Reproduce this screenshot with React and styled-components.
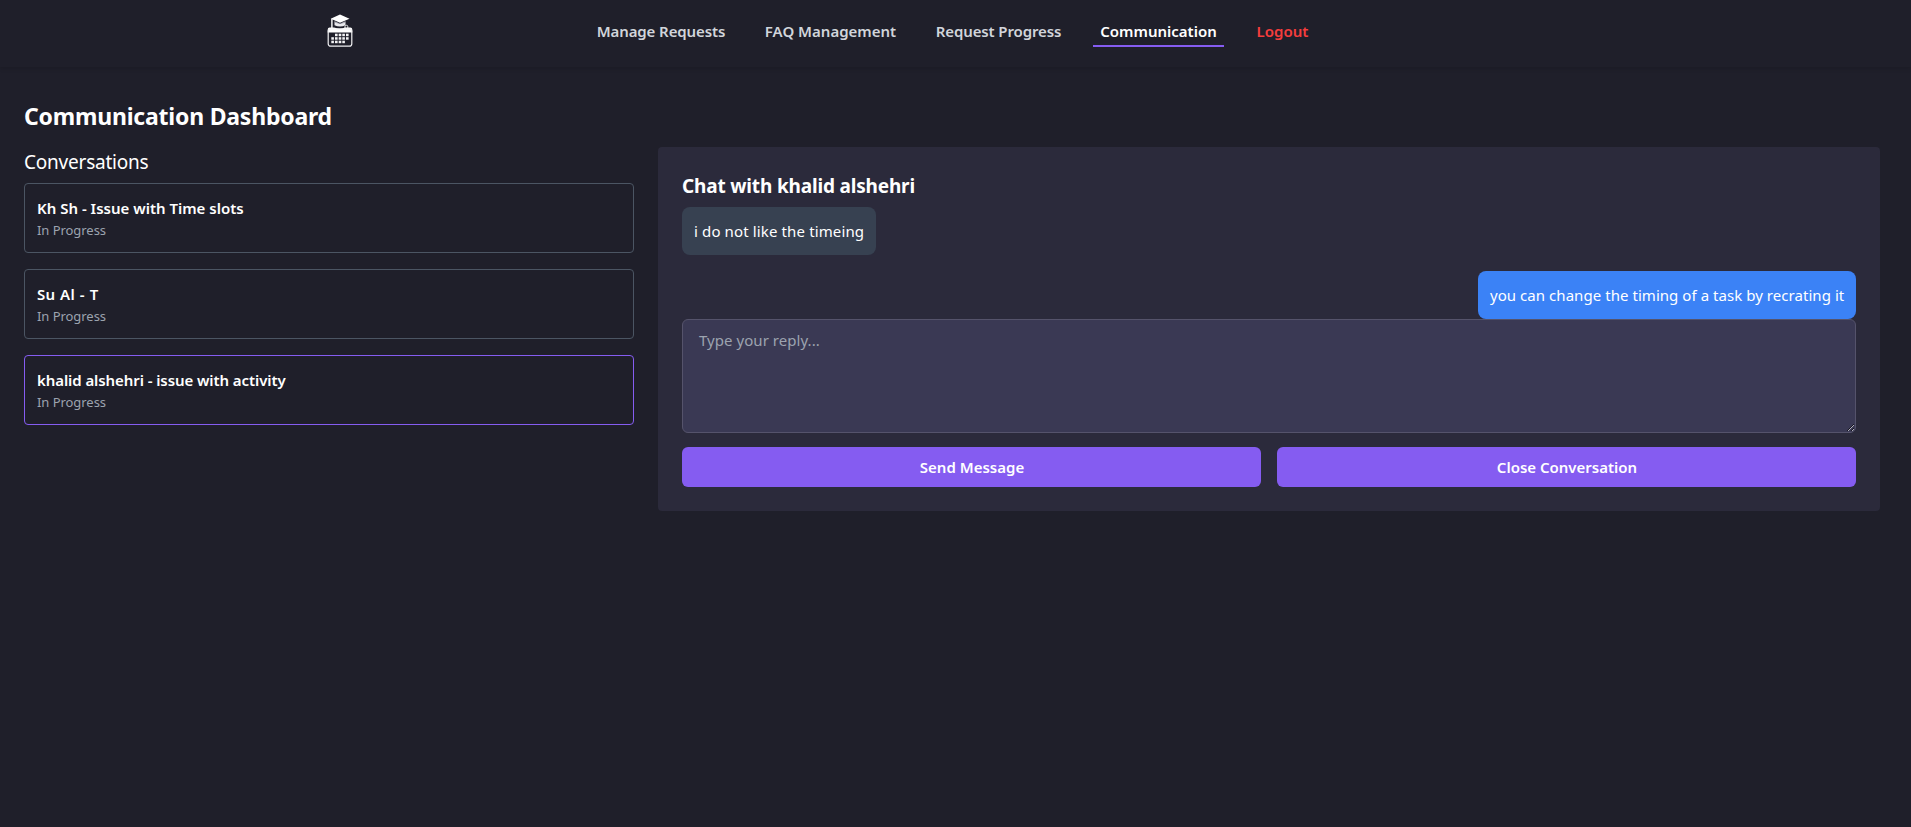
import React from "react";
import styled, { createGlobalStyle } from "styled-components";

const Global = createGlobalStyle`
  *, *::before, *::after { box-sizing: border-box; }
  body {
    margin: 0;
    min-height: 100vh;
    background: #1f1f2a;
    color: #fff;
    font: 400 16px/24px "Segoe UI", "Noto Sans", sans-serif;
  }
  h1, h2, h3, p { margin: 0; }
`;

const Header = styled.header`
  display: flex;
  align-items: flex-start;
  height: 67px;
  padding: 14px 0 0 327px;
  background: #1f1f2a;
  box-shadow: 0 2px 4px rgba(0, 0, 0, 0.12);
`;

const Logo = styled.svg`
  width: 26px;
  height: 33px;
  flex: none;
`;

const Nav = styled.nav`
  display: flex;
  gap: 24px;
  margin-left: 236px;
`;

const NavLink = styled.a`
  flex: none;
  width: ${(p) => p.$width}px;
  height: 33px;
  padding: 5px 0 0;
  text-align: center;
  white-space: nowrap;
  font-weight: 600;
  font-size: 15px;
  letter-spacing: ${(p) => p.$track || 0}px;
  color: ${(p) => p.$color || "#d1d5db"};
  border-bottom: 2px solid ${(p) => (p.$active ? "#855cf1" : "transparent")};
`;

const Main = styled.main`
  width: 1904px;
  padding: 33px 24px 24px;
`;

const PageTitle = styled.h1`
  font-weight: 700;
  font-size: 23px;
  line-height: 32px;
  letter-spacing: -0.21px;
`;

const Columns = styled.div`
  display: grid;
  grid-template-columns: 610px 1fr;
  gap: 24px;
  align-items: start;
  margin-top: 15px;
`;

const SectionTitle = styled.h2`
  font-weight: 400;
  font-size: 19px;
  line-height: 28px;
  letter-spacing: -0.22px;
  padding-top: 1px;
  margin-bottom: 7px;
`;

const ConversationList = styled.div`
  display: flex;
  flex-direction: column;
  gap: 16px;
`;

const Conversation = styled.div`
  height: 70px;
  padding: 12px;
  border: 1px solid ${(p) => (p.$selected ? "#855cf1" : "#4b5563")};
  border-radius: 4px;
`;

const Subject = styled.p`
  font-weight: 600;
  font-size: 15px;
  line-height: 24px;
  letter-spacing: ${(p) => p.$track || 0}px;
  word-spacing: ${(p) => p.$gap || 0}px;
`;

const Status = styled.p`
  font-size: 13px;
  line-height: 20px;
  letter-spacing: -0.05px;
  color: #9ca3af;
`;

const Panel = styled.section`
  height: 364px;
  padding: 24px;
  background: #2b2a3b;
  border-radius: 4px;
`;

const ChatTitle = styled.h3`
  font-weight: 700;
  font-size: 19px;
  line-height: 28px;
  letter-spacing: -0.17px;
  padding-top: 1px;
  margin-bottom: 7px;
`;

const Messages = styled.div`
  display: flex;
  flex-direction: column;
  gap: 16px;
`;

const Bubble = styled.div`
  align-self: ${(p) => (p.$mine ? "flex-end" : "flex-start")};
  width: ${(p) => p.$width}px;
  padding: 12px;
  border-radius: 8px;
  background: ${(p) => (p.$mine ? "#3b82f6" : "#374151")};
  font-size: 15px;
  letter-spacing: ${(p) => (p.$mine ? 0.05 : 0.13)}px;
  white-space: nowrap;
`;

const Reply = styled.textarea`
  display: block;
  width: 100%;
  height: 114px;
  padding: 8px 16px;
  border: 1px solid #55536b;
  border-radius: 6px;
  background: #3a3954;
  color: #fff;
  font: inherit;
  font-size: 15px;
  letter-spacing: 0.05px;
  &::placeholder { color: #9ca3af; }
`;

const Actions = styled.div`
  display: grid;
  grid-template-columns: 1fr 1fr;
  gap: 16px;
  margin-top: 14px;
`;

const Button = styled.button`
  height: 40px;
  padding: 0 0 0 1px;
  border: 0;
  border-radius: 6px;
  background: #855cf1;
  color: #fff;
  font: inherit;
  font-weight: 600;
  font-size: 15px;
`;

const navItems = [
  { label: "Manage Requests", width: 144, track: -0.1 },
  { label: "FAQ Management", width: 147 },
  { label: "Request Progress", width: 141, track: -0.12 },
  { label: "Communication", width: 131, active: true, color: "#fff" },
  { label: "Logout", width: 69, color: "#f53d3d" },
];

const conversations = [
  { subject: "Kh Sh - Issue with Time slots" },
  { subject: "Su Al - T", track: 0.2, gap: 0.8 },
  { subject: "khalid alshehri - issue with activity", track: -0.08, selected: true },
];

const dots = [
  [8, 19.7], [11.7, 19.7], [15.3, 19.7], [19, 19.7],
  [4.3, 23.2], [8, 23.2], [11.7, 23.2], [15.3, 23.2], [19, 23.2],
  [4.3, 26.7], [8, 26.7], [11.7, 26.7], [15.3, 26.7],
];

function CalendarLogo() {
  return (
    <Logo viewBox="0 0 26 33" fill="none">
      <path d="M13 0.500 22.500 4.700 13 8.700 3.700 4.700Z" fill="#fff" />
      <path d="M7.500 7.300 13 9.700l5.500-2.400v3.900Q13 14 7.500 11.200Z" fill="#e8e8ec" />
      <path d="M8 8.300Q13 11 18 8.300" stroke="#77778a" strokeWidth="0.500" />
      <path d="M4.900 5v9" stroke="#fff" strokeWidth="1.400" />
      <rect x="18" y="11.300" width="2.800" height="4" rx="1.300" stroke="#eee" strokeWidth="1" />
      <path d="M0.700 15.500q0-2 2-2h4.300q6 2.200 11 0h5.300q2 0 2 2v3H0.700Z" fill="#fff" />
      <rect x="1.200" y="15" width="23.600" height="17.200" rx="2.500" stroke="#f0f0f2" strokeWidth="1.200" />
      {dots.map(([x, y]) => (
        <rect key={`${x}-${y}`} x={x} y={y} width="2.600" height="2.500" fill="#f3f3f5" />
      ))}
    </Logo>
  );
}

export default function App() {
  return (
    <>
      <Global />
      <Header>
        <CalendarLogo />
        <Nav>
          {navItems.map((n) => (
            <NavLink key={n.label} $width={n.width} $track={n.track} $active={n.active} $color={n.color}>
              {n.label}
            </NavLink>
          ))}
        </Nav>
      </Header>
      <Main>
        <PageTitle>Communication Dashboard</PageTitle>
        <Columns>
          <section>
            <SectionTitle>Conversations</SectionTitle>
            <ConversationList>
              {conversations.map((c) => (
                <Conversation key={c.subject} $selected={c.selected}>
                  <Subject $track={c.track} $gap={c.gap}>{c.subject}</Subject>
                  <Status>In Progress</Status>
                </Conversation>
              ))}
            </ConversationList>
          </section>
          <Panel>
            <ChatTitle>Chat with khalid alshehri</ChatTitle>
            <Messages>
              <Bubble $width={194}>i do not like the timeing</Bubble>
              <Bubble $width={378} $mine>you can change the timing of a task by recrating it</Bubble>
            </Messages>
            <Reply placeholder="Type your reply..." />
            <Actions>
              <Button>Send Message</Button>
              <Button>Close Conversation</Button>
            </Actions>
          </Panel>
        </Columns>
      </Main>
    </>
  );
}
